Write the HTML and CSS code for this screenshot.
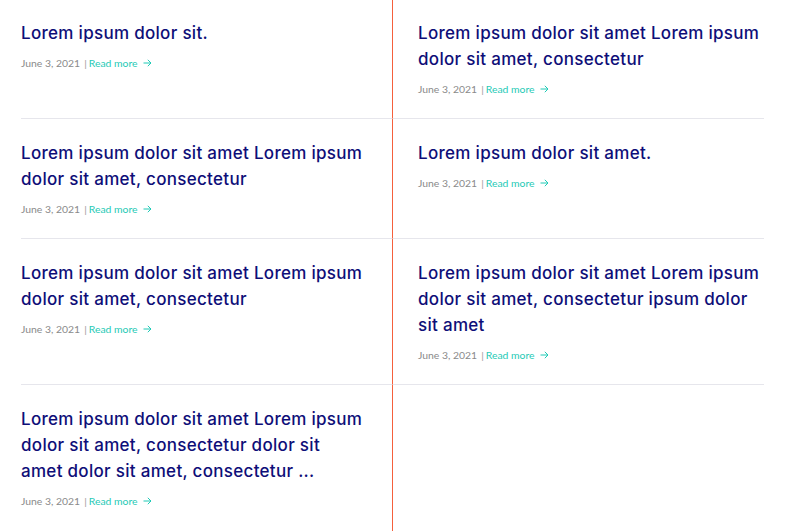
FILE: index.html
```html
<!DOCTYPE html>
<html>
<head>
<meta charset="utf-8">
<link rel="stylesheet" href="styles.css">
</head>
<body>
<div class="grid">
  <article class="post left first">
    <h2 class="title">Lorem ipsum dolor sit.</h2>
    <p class="meta"><span class="date">June 3, 2021</span><span class="sep">|</span><a class="more" href="#">Read more <svg class="arrow" width="9" height="8" viewBox="0 0 9 8"><path d="M0.5 4H8M4.8 0.8L8 4L4.8 7.2" fill="none" stroke="currentColor" stroke-width="1"/></svg></a></p>
  </article>
  <article class="post right first">
    <h2 class="title">Lorem ipsum dolor sit amet Lorem ipsum dolor sit amet, consectetur</h2>
    <p class="meta"><span class="date">June 3, 2021</span><span class="sep">|</span><a class="more" href="#">Read more <svg class="arrow" width="9" height="8" viewBox="0 0 9 8"><path d="M0.5 4H8M4.8 0.8L8 4L4.8 7.2" fill="none" stroke="currentColor" stroke-width="1"/></svg></a></p>
  </article>
  <article class="post left">
    <h2 class="title">Lorem ipsum dolor sit amet Lorem ipsum dolor sit amet, consectetur</h2>
    <p class="meta"><span class="date">June 3, 2021</span><span class="sep">|</span><a class="more" href="#">Read more <svg class="arrow" width="9" height="8" viewBox="0 0 9 8"><path d="M0.5 4H8M4.8 0.8L8 4L4.8 7.2" fill="none" stroke="currentColor" stroke-width="1"/></svg></a></p>
  </article>
  <article class="post right">
    <h2 class="title">Lorem ipsum dolor sit amet.</h2>
    <p class="meta"><span class="date">June 3, 2021</span><span class="sep">|</span><a class="more" href="#">Read more <svg class="arrow" width="9" height="8" viewBox="0 0 9 8"><path d="M0.5 4H8M4.8 0.8L8 4L4.8 7.2" fill="none" stroke="currentColor" stroke-width="1"/></svg></a></p>
  </article>
  <article class="post left">
    <h2 class="title">Lorem ipsum dolor sit amet Lorem ipsum dolor sit amet, consectetur</h2>
    <p class="meta"><span class="date">June 3, 2021</span><span class="sep">|</span><a class="more" href="#">Read more <svg class="arrow" width="9" height="8" viewBox="0 0 9 8"><path d="M0.5 4H8M4.8 0.8L8 4L4.8 7.2" fill="none" stroke="currentColor" stroke-width="1"/></svg></a></p>
  </article>
  <article class="post right">
    <h2 class="title">Lorem ipsum dolor sit amet Lorem ipsum dolor sit amet, consectetur ipsum dolor sit amet</h2>
    <p class="meta"><span class="date">June 3, 2021</span><span class="sep">|</span><a class="more" href="#">Read more <svg class="arrow" width="9" height="8" viewBox="0 0 9 8"><path d="M0.5 4H8M4.8 0.8L8 4L4.8 7.2" fill="none" stroke="currentColor" stroke-width="1"/></svg></a></p>
  </article>
  <article class="post left last">
    <h2 class="title">Lorem ipsum dolor sit amet Lorem ipsum dolor sit amet, consectetur dolor sit amet dolor sit amet, consectetur ...</h2>
    <p class="meta"><span class="date">June 3, 2021</span><span class="sep">|</span><a class="more" href="#">Read more <svg class="arrow" width="9" height="8" viewBox="0 0 9 8"><path d="M0.5 4H8M4.8 0.8L8 4L4.8 7.2" fill="none" stroke="currentColor" stroke-width="1"/></svg></a></p>
  </article>
  <div class="post right last empty"></div>
</div>
</body>
</html>
```
FILE: styles.css
```css
html, body {
  margin: 0;
  padding: 0;
  background: #ffffff;
}
body {
  font-family: "Lato", "Liberation Sans", sans-serif;
}
.grid {
  display: grid;
  grid-template-columns: 372px 371px;
  grid-template-rows: auto auto auto 1fr;
  min-height: 100vh;
  margin-left: 21px;
  width: 743px;
}
.post {
  padding: 21px 0 21px 0;
  border-bottom: 1px solid #e6e6ec;
}
.post.first {
  padding-top: 20px;
}
.post.last {
  border-bottom: none;
}
.left {
  border-right: 1px solid #f5603c;
  padding-right: 28px;
}
.right {
  padding-left: 25px;
  padding-right: 3px;
}
.title {
  margin: 0;
  font-family: "Inter", "Noto Sans", sans-serif;
  font-weight: 500;
  font-size: 17px;
  line-height: 26px;
  color: #0e0e78;
  letter-spacing: 0.3px;
}
.meta {
  margin: 9px 0 0 0;
  font-size: 10.4px;
  line-height: 16px;
  color: #8a8a8a;
  display: flex;
  align-items: center;
}
.sep {
  margin: 0 2px 0 4px;
  color: #9a9a9a;
}
.more {
  color: #1fcab6;
  text-decoration: none;
  display: inline-flex;
  align-items: center;
}
.arrow {
  margin-left: 5px;
  color: #1fcab6;
}
```
